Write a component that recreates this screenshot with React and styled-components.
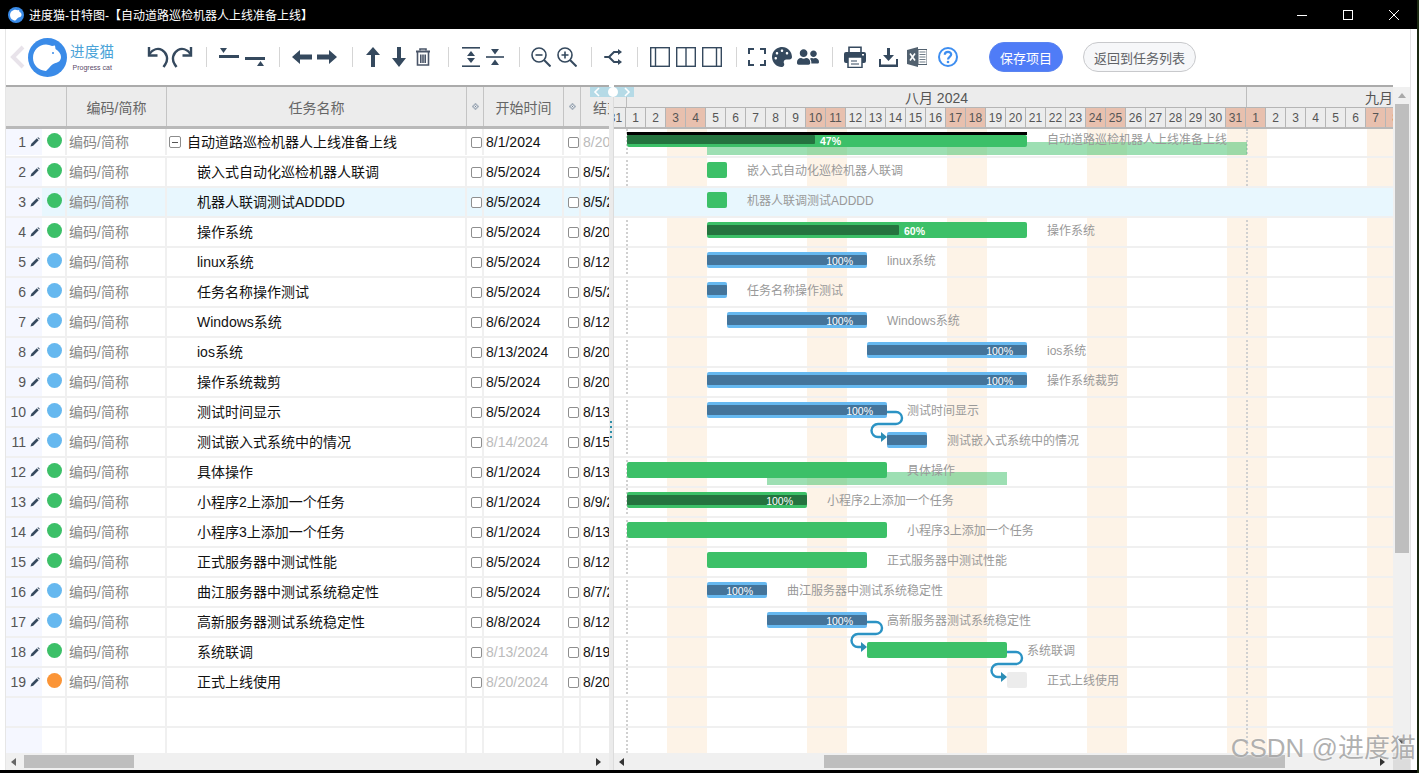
import React from "react";
import styled, { createGlobalStyle } from "styled-components";
import { FaPalette, FaUserFriends } from "react-icons/fa";

const FONT = `"Liberation Sans", "Noto Sans CJK SC", sans-serif`;
const DAY = 20;
const ORIGIN = 13; // the first full day (Aug 1) starts 13px into the chart

const GREEN = "#3cc068";
const BLUE = "#66b8ef";
const ORANGE = "#fb9537";

const tasks = [
  { name: "自动道路巡检机器人上线准备上线", start: "8/1/2024", end: "8/20/2024", color: GREEN, from: 1, to: 21, summary: true, percent: 47, progressTo: 10.4, parent: true, startBase: 5, endBase: 32 },
  { name: "嵌入式自动化巡检机器人联调", start: "8/5/2024", end: "8/5/2024", color: GREEN, from: 5, to: 6 },
  { name: "机器人联调测试ADDDD", start: "8/5/2024", end: "8/5/2024", color: GREEN, from: 5, to: 6 },
  { name: "操作系统", start: "8/5/2024", end: "8/20/2024", color: GREEN, from: 5, to: 21, percent: 60, progressTo: 14.6 },
  { name: "linux系统", start: "8/5/2024", end: "8/12/2024", color: BLUE, from: 5, to: 13, percent: 100 },
  { name: "任务名称操作测试", start: "8/5/2024", end: "8/5/2024", color: BLUE, from: 5, to: 6, done: true },
  { name: "Windows系统", start: "8/6/2024", end: "8/12/2024", color: BLUE, from: 6, to: 13, percent: 100 },
  { name: "ios系统", start: "8/13/2024", end: "8/20/2024", color: BLUE, from: 13, to: 21, percent: 100 },
  { name: "操作系统裁剪", start: "8/5/2024", end: "8/20/2024", color: BLUE, from: 5, to: 21, percent: 100 },
  { name: "测试时间显示", start: "8/5/2024", end: "8/13/2024", color: BLUE, from: 5, to: 14, percent: 100 },
  { name: "测试嵌入式系统中的情况", start: "8/14/2024", end: "8/15/2024", startMuted: true, color: BLUE, from: 14, to: 16, done: true },
  { name: "具体操作", start: "8/1/2024", end: "8/13/2024", color: GREEN, from: 1, to: 14, startBase: 8, endBase: 20 },
  { name: "小程序2上添加一个任务", start: "8/1/2024", end: "8/9/2024", color: GREEN, from: 1, to: 10, percent: 100 },
  { name: "小程序3上添加一个任务", start: "8/1/2024", end: "8/13/2024", color: GREEN, from: 1, to: 14 },
  { name: "正式服务器中测试性能", start: "8/5/2024", end: "8/12/2024", color: GREEN, from: 5, to: 13 },
  { name: "曲江服务器中测试系统稳定性", start: "8/5/2024", end: "8/7/2024", color: BLUE, from: 5, to: 8, percent: 100 },
  { name: "高新服务器测试系统稳定性", start: "8/8/2024", end: "8/12/2024", color: BLUE, from: 8, to: 13, percent: 100 },
  { name: "系统联调", start: "8/13/2024", end: "8/19/2024", startMuted: true, color: GREEN, from: 13, to: 20 },
  { name: "正式上线使用", start: "8/20/2024", end: "8/20/2024", startMuted: true, color: ORANGE, from: 20, to: 21, empty: true },
];

const WEEKENDS = [3, 4, 10, 11, 17, 18, 24, 25, 31, 32, 38, 39];
const dayLabels = [31];
for (let d = 1; d <= 31; d++) dayLabels.push(d);
for (let d = 1; d <= 8; d++) dayLabels.push(d);

const xOf = (day) => ORIGIN + (day - 1) * DAY;

const GlobalStyle = createGlobalStyle`
  html, body { margin: 0; padding: 0; height: 100%; overflow: hidden; background: #000; }
  body { font-family: ${FONT}; font-size: 14px; }
  * { box-sizing: border-box; }
`;

const Page = styled.div`
  width: 1419px;
  height: 773px;
  display: flex;
  flex-direction: column;
  background: #000;
  border-right: 2px solid #1c2a12;
`;

const TitleBar = styled.div`
  height: 29px;
  flex: none;
  display: flex;
  align-items: center;
  padding-left: 8px;
  color: #fff;
  font-size: 12px;
`;

const TitleText = styled.span`
  margin-left: 5px;
  flex: 1;
`;

const WindowButton = styled.div`
  width: 46px;
  height: 29px;
  display: flex;
  align-items: center;
  justify-content: center;
`;

const WindowBody = styled.div`
  height: 741px;
  flex: none;
  display: flex;
  flex-direction: column;
  background: #fff;
  padding: 0 6px 0 5px;
`;

const Toolbar = styled.div`
  height: 56px;
  flex: none;
  display: flex;
  align-items: center;
  padding-left: 3px;
  border-left: 1px solid #e6e6e6;
  border-right: 1px solid #e6e6e6;
`;

const Logo = styled.div`
  display: flex;
  align-items: center;
  width: 96px;
  margin-left: 3px;
`;

const LogoWords = styled.div`
  display: flex;
  flex-direction: column;
  align-items: center;
  margin-left: 3px;
  margin-top: 1px;
`;

const LogoName = styled.span`
  color: #4aa3d8;
  font-size: 14.5px;
  line-height: 18px;
  letter-spacing: 0.3px;
`;

const LogoSub = styled.span`
  color: #5a4a6a;
  font-size: 7px;
  line-height: 10px;
  margin-top: 2px;
  white-space: nowrap;
`;

const ToolIcon = styled.span`
  display: flex;
  align-items: center;
  justify-content: center;
  width: ${(p) => p.$w || 20}px;
  margin-left: ${(p) => p.$gap ?? 0}px;
  color: #35495e;
`;

const Separator = styled.span`
  width: 1px;
  height: 20px;
  background: #d5d5d5;
  margin-left: ${(p) => p.$gap ?? 12}px;
`;

const PillButton = styled.button`
  height: 30px;
  border-radius: 15px;
  font: 13px ${FONT};
  padding: 0;
  width: ${(p) => p.$w}px;
  margin-left: ${(p) => p.$gap}px;
  color: ${(p) => (p.$primary ? "#fff" : "#606266")};
  background: ${(p) => (p.$primary ? "#4f7cf7" : "#f6f7f9")};
  border: 1px solid ${(p) => (p.$primary ? "#5a84f0" : "#c8c9cc")};
`;

const Workspace = styled.div`
  flex: 1;
  min-height: 0;
  display: flex;
  position: relative;
  border-left: 1px solid #e6e6e6;
`;

const TablePanel = styled.div`
  width: 603px;
  flex: none;
  display: flex;
  flex-direction: column;
  overflow: hidden;
`;

const TableHead = styled.div`
  height: 44px;
  flex: none;
  display: grid;
  grid-template-columns: 61px 100px 300px 17px 80px 17px 80px;
  background: #ececec;
  border-top: 2px solid #ababab;
  border-bottom: 3px solid #b9b9b9;
`;

const HeadCell = styled.div`
  display: flex;
  align-items: center;
  justify-content: center;
  white-space: nowrap;
  overflow: hidden;
  color: #666;
  border-right: ${(p) => (p.$last ? "none" : "1px solid #c4c4c4")};
`;

const Diamond = styled.span`
  width: 5px;
  height: 5px;
  background: #66788a;
  border: 1px solid #b4bcc6;
  box-shadow: inset 0 0 0 1px #eef0f2;
  transform: rotate(45deg);
`;

const TableRows = styled.div`
  flex: 1;
  min-height: 0;
  overflow: hidden;
`;

const Row = styled.div`
  height: 30px;
  display: grid;
  grid-template-columns: 36px 25px 100px 300px 17px 80px 17px 80px;
  border-bottom: 2px solid #f0f0f0;
  background: ${(p) => (p.$active ? "#e8f7fe" : "transparent")};
  &:first-child {
    height: 29px;
    padding-bottom: 1px;
  }
`;

const Cell = styled.div`
  display: flex;
  align-items: center;
  overflow: hidden;
  white-space: nowrap;
  min-width: 0;
  border-right: ${(p) => (p.$plain ? 0 : 2)}px solid #f0f0f0;
`;

const NumCell = styled.div`
  display: flex;
  align-items: center;
  justify-content: flex-end;
  background: #f5f7ff;
  color: #555;
  padding-right: 2px;
`;

const RowNumber = styled.span`
  margin-right: 4px;
`;

const StatusCell = styled(Cell)`
  padding-left: 5px;
`;

const StatusDot = styled.span`
  width: 15px;
  height: 15px;
  border-radius: 50%;
  margin-top: -4px;
  background: ${(p) => p.$color};
`;

const CodeCell = styled(Cell)`
  color: #888;
  padding-left: 2px;
  padding-bottom: 2px;
`;

const NameCell = styled(Cell)`
  color: #111;
  padding-left: ${(p) => (p.$parent ? 2 : 30)}px;
  padding-bottom: 2px;
`;

const Collapse = styled.span`
  width: 12px;
  height: 12px;
  margin-right: 6px;
  margin-top: 2px;
  flex: none;
  border: 1px solid #8c8c8c;
  border-radius: 2px;
  display: flex;
  align-items: center;
  justify-content: center;
  &::before {
    content: "";
    width: 6px;
    height: 1px;
    background: #555;
  }
`;

const CheckCell = styled(Cell)`
  padding-left: 4px;
`;

const DateCell = styled(Cell)`
  color: ${(p) => (p.$muted ? "#bbb" : "#111")};
  padding-left: 2px;
`;

const Check = styled.span`
  width: 11px;
  height: 11px;
  flex: none;
  border: 1px solid #8f8f8f;
  border-radius: 2px;
  background: #fff;
`;

const Splitter = styled.div`
  width: 5px;
  flex: none;
  margin-top: 2px;
  padding-top: 334px;
  background: #ebebeb;
  border-right: 1px solid #dcdcdc;
  display: flex;
  flex-direction: column;
  gap: 3px;
`;

const GripDot = styled.span`
  width: 2px;
  height: 2px;
  margin-left: 1px;
  background: #2e8fa8;
`;

const SliderTab = styled.div`
  position: absolute;
  left: 584px;
  top: 2px;
  width: 44px;
  height: 10px;
  background: #b5dae6;
  display: flex;
  align-items: center;
  justify-content: space-between;
  padding: 0 3px;
`;

const SliderKnob = styled.span`
  position: absolute;
  left: 18px;
  top: 0;
  width: 10px;
  height: 10px;
  border-radius: 50%;
  background: #fff;
`;

const GanttPanel = styled.div`
  width: 797px;
  flex: none;
  display: flex;
  border-right: 1px solid #e6e6e6;
`;

const GanttMain = styled.div`
  width: 779px;
  flex: none;
  display: flex;
  flex-direction: column;
  overflow: hidden;
`;

const GanttHead = styled.div`
  height: 44px;
  flex: none;
  background: #ececec;
  border-top: 2px solid #ababab;
  border-bottom: 2px solid #b9b9b9;
  overflow: hidden;
`;

const MonthRow = styled.div`
  height: 20px;
  display: flex;
`;

const Month = styled.div`
  flex: none;
  height: 20px;
  line-height: 22px;
  color: #555;
  white-space: nowrap;
  width: ${(p) => p.$w}px;
  text-align: ${(p) => (p.$left ? "left" : "center")};
  padding-left: ${(p) => (p.$left ? 118 : 0)}px;
  border-right: 1px solid #bdbdbd;
`;

const DayRow = styled.div`
  height: 20px;
  display: flex;
  margin-left: -8px;
  border-top: 1px solid #b5b5b5;
`;

const DayCell = styled.div`
  width: 20px;
  flex: none;
  font-size: 12px;
  line-height: 20px;
  text-align: center;
  color: #555;
  background: ${(p) => (p.$weekend ? "#e8c0ae" : "#ececec")};
  border-right: 1px solid #b5b5b5;
`;

const Chart = styled.div`
  flex: 1;
  min-height: 0;
  position: relative;
  overflow: hidden;
`;

const Stripes = styled.div`
  position: absolute;
  inset: 0;
  display: flex;
  margin-left: -7px;
`;

const Stripe = styled.div`
  width: 20px;
  flex: none;
  background: ${(p) => (p.$weekend ? "#fdf3e7" : "transparent")};
`;

const TodayLine = styled.div`
  position: absolute;
  top: 0;
  bottom: 0;
  border-left: 2px dotted #d0d0d0;
`;

const ChartRow = styled.div`
  position: relative;
  height: ${(p) => (p.$first ? 29 : 30)}px;
  border-bottom: 2px solid #f0f0f0;
  background: ${(p) => (p.$active ? "#e8f7fe" : "transparent")};
`;

const Bar = styled.div`
  position: absolute;
  top: ${(p) => (p.$first ? 6 : 4)}px;
  height: ${(p) => (p.$first ? 12 : 16)}px;
  border-radius: 2px;
  background: ${(p) => p.$color};
`;

const Progress = styled.div`
  position: absolute;
  left: 0;
  top: ${(p) => (p.$first ? 0 : 3)}px;
  height: ${(p) => (p.$first ? 9 : 10)}px;
  border-radius: 1px;
  background: ${(p) => p.$color};
`;

const Percent = styled.span`
  position: absolute;
  top: ${(p) => (p.$first ? 0 : 3)}px;
  right: 14px;
  color: #fff;
  font-size: 10.5px;
  line-height: 13px;
  font-weight: ${(p) => (p.$bold ? 700 : 400)};
  white-space: nowrap;
`;

const SummaryCap = styled.div`
  position: absolute;
  top: 3px;
  height: 3px;
  background: #000;
`;

const Baseline = styled.div`
  position: absolute;
  height: 13px;
  top: ${(p) => (p.$first ? 13 : 14)}px;
  background: rgba(60, 192, 104, 0.5);
`;

const BarLabel = styled.span`
  position: absolute;
  top: ${(p) => (p.$first ? 3 : 5)}px;
  font-size: 12px;
  line-height: 16px;
  color: #999;
  white-space: nowrap;
`;

const Links = styled.svg`
  position: absolute;
  left: 0;
  top: 0;
  pointer-events: none;
`;

const VScroll = styled.div`
  width: 17px;
  flex: none;
  margin-top: 2px;
  padding-top: 5px;
  background: #f0f0f0;
  display: flex;
  flex-direction: column;
  align-items: center;
`;

const VThumb = styled.div`
  width: 14px;
  height: 449px;
  margin-top: 2px;
  margin-bottom: auto;
  background: #bebebe;
`;

const VCorner = styled.div`
  margin-top: 5px;
  width: 17px;
  height: 17px;
  background: #dcdcdc;
`;

const HScroll = styled.div`
  height: 17px;
  flex: none;
  display: flex;
  align-items: center;
  justify-content: space-between;
  background: #f0f0f0;
  padding: 0 4px;
  position: relative;
`;

const HThumb = styled.div`
  position: absolute;
  top: 2px;
  height: 13px;
  background: #bebebe;
  left: ${(p) => p.$left}px;
  width: ${(p) => p.$w}px;
`;

const Watermark = styled.div`
  position: absolute;
  right: -5px;
  bottom: 7px;
  font-size: 26px;
  line-height: 30px;
  color: rgba(150, 150, 150, 0.75);
  text-shadow: 0 0 2px rgba(255, 255, 255, 0.9);
  white-space: nowrap;
`;

const Arrow = ({ dir, color = "#666" }) => {
  const shapes = {
    left: "6,1 6,9 1,5",
    right: "1,1 1,9 6,5",
    up: "1,6 9,6 5,1",
    down: "1,1 9,1 5,6",
  };
  return (
    <svg width="10" height="10" viewBox="0 0 10 10">
      <polygon points={shapes[dir]} fill={color} />
    </svg>
  );
};

const Chevron = ({ flip }) => (
  <svg width="8" height="10" viewBox="0 0 8 10" fill="none">
    <path d={flip ? "M2 1 L6 5 L2 9" : "M6 1 L2 5 L6 9"} stroke="#fff" strokeWidth="1.6" />
  </svg>
);

const C = "#35495e";

const icons = {
  undo: (
    <svg width="22" height="22" viewBox="0 0 22 22" fill="none" stroke={C} strokeWidth="2.4">
      <path d="M2.5 8 C6 3 11 2 15 4 C20 7 21.5 13 18.5 18 L16.5 21" />
      <path d="M2 1 V9.5 H10.5" />
    </svg>
  ),
  redo: (
    <svg width="22" height="22" viewBox="0 0 22 22" fill="none" stroke={C} strokeWidth="2.4">
      <path d="M19.5 8 C16 3 11 2 7 4 C2 7 0.5 13 3.5 18 L5.5 21" />
      <path d="M20 1 V9.5 H11.5" />
    </svg>
  ),
  insertAbove: (
    <svg width="20" height="20" viewBox="0 0 20 20">
      <polygon points="1,1 8,1 4.5,6" fill={C} />
      <rect x="0" y="8" width="20" height="3" fill={C} />
    </svg>
  ),
  insertBelow: (
    <svg width="20" height="20" viewBox="0 0 20 20">
      <rect x="0" y="10" width="20" height="3" fill={C} />
      <polygon points="12,19 19,19 15.5,14" fill={C} />
    </svg>
  ),
  left: (
    <svg width="20" height="14" viewBox="0 0 20 14">
      <polygon points="0,7 8,0 8,4.5 20,4.5 20,9.5 8,9.5 8,14" fill={C} />
    </svg>
  ),
  right: (
    <svg width="20" height="14" viewBox="0 0 20 14">
      <polygon points="20,7 12,0 12,4.5 0,4.5 0,9.5 12,9.5 12,14" fill={C} />
    </svg>
  ),
  up: (
    <svg width="14" height="20" viewBox="0 0 14 20">
      <polygon points="7,0 14,8 9,8 9,20 5,20 5,8 0,8" fill={C} />
    </svg>
  ),
  down: (
    <svg width="14" height="20" viewBox="0 0 14 20">
      <polygon points="7,20 14,11 9,11 9,0 5,0 5,11 0,11" fill={C} />
    </svg>
  ),
  trash: (
    <svg width="16" height="18" viewBox="0 0 16 18" fill="none" stroke="#4a5568" strokeWidth="1.6">
      <path d="M5 2.5 V1 H11 V2.5" />
      <path d="M1 3.5 H15" strokeWidth="2" />
      <path d="M2.5 4 V17 H13.5 V4" />
      <path d="M5.8 6.5 V15 M8 6.5 V15 M10.2 6.5 V15" />
    </svg>
  ),
  expand: (
    <svg width="18" height="20" viewBox="0 0 18 20">
      <rect x="0" y="0" width="18" height="1.6" fill={C} />
      <rect x="0" y="18.4" width="18" height="1.6" fill={C} />
      <polygon points="9,4 13,9 5,9" fill={C} />
      <polygon points="9,16 13,11 5,11" fill={C} />
    </svg>
  ),
  collapse: (
    <svg width="18" height="20" viewBox="0 0 18 20">
      <rect x="0" y="9.2" width="18" height="1.6" fill={C} />
      <polygon points="9,7.5 13,2 5,2" fill={C} />
      <polygon points="9,12.5 13,18 5,18" fill={C} />
    </svg>
  ),
  zoomOut: (
    <svg width="20" height="20" viewBox="0 0 20 20" fill="none" stroke={C} strokeWidth="1.6">
      <circle cx="8" cy="8" r="7" />
      <path d="M12.8 12.8 L19.5 19.5" strokeWidth="2" />
      <path d="M4.5 8 H11.5" />
    </svg>
  ),
  zoomIn: (
    <svg width="20" height="20" viewBox="0 0 20 20" fill="none" stroke={C} strokeWidth="1.6">
      <circle cx="8" cy="8" r="7" />
      <path d="M12.8 12.8 L19.5 19.5" strokeWidth="2" />
      <path d="M4.5 8 H11.5 M8 4.5 V11.5" />
    </svg>
  ),
  link: (
    <svg width="20" height="18" viewBox="0 0 20 18" fill="none" stroke={C} strokeWidth="2">
      <path d="M2 9 H6 L11 4 H16" />
      <path d="M6 9 L11 14 H16" />
      <polygon points="15,1 19,4 15,7" fill={C} strokeWidth="0" />
      <polygon points="15,11 19,14 15,17" fill={C} strokeWidth="0" />
      <circle cx="2" cy="9" r="1" fill={C} stroke="none" />
    </svg>
  ),
  paneLeft: (
    <svg width="20" height="20" viewBox="0 0 20 20" fill="none" stroke={C} strokeWidth="1.4">
      <rect x="0.7" y="0.7" width="18.6" height="18.6" />
      <path d="M5.5 1 V19" />
    </svg>
  ),
  paneMid: (
    <svg width="20" height="20" viewBox="0 0 20 20" fill="none" stroke={C} strokeWidth="1.4">
      <rect x="0.7" y="0.7" width="18.6" height="18.6" />
      <path d="M10 1 V19" />
    </svg>
  ),
  paneRight: (
    <svg width="20" height="20" viewBox="0 0 20 20" fill="none" stroke={C} strokeWidth="1.4">
      <rect x="0.7" y="0.7" width="18.6" height="18.6" />
      <path d="M14.5 1 V19" />
    </svg>
  ),
  fullscreen: (
    <svg width="18" height="18" viewBox="0 0 18 18" fill="none" stroke={C} strokeWidth="2">
      <path d="M1 6 V1 H6 M12 1 H17 V6 M17 12 V17 H12 M6 17 H1 V12" />
    </svg>
  ),
  print: (
    <svg width="22" height="22" viewBox="0 0 22 22">
      <path d="M5 6 V1.2 H17 V6" fill="none" stroke={C} strokeWidth="1.6" />
      <rect x="0" y="6" width="22" height="11" rx="2" fill={C} />
      <rect x="4" y="11" width="14" height="10.5" fill="#fff" stroke={C} strokeWidth="1.5" />
      <path d="M7 15 H13 M7 18 H15" stroke={C} strokeWidth="1.2" />
      <rect x="18" y="8" width="2" height="1.5" fill="#fff" />
    </svg>
  ),
  download: (
    <svg width="19" height="19" viewBox="0 0 19 19" fill={C}>
      <rect x="8" y="0" width="3" height="8" />
      <polygon points="4,7 15,7 9.5,13" />
      <path d="M0 11 H2 V16.5 H17 V11 H19 V19 H0 Z" />
    </svg>
  ),
  excel: (
    <svg width="20" height="20" viewBox="0 0 20 20">
      <polygon points="0,3 11,0 11,20 0,17" fill="#52616f" />
      <rect x="11" y="2.5" width="9" height="15" fill="#fff" stroke="#52616f" strokeWidth="1" />
      <path d="M12.5 5 H18.5 M12.5 7.5 H18.5 M12.5 10 H18.5 M12.5 12.5 H18.5 M12.5 15 H18.5" stroke="#6f7c88" strokeWidth="1.2" />
      <path d="M3 6.5 L8 13.5 M8 6.5 L3 13.5" stroke="#fff" strokeWidth="1.6" />
    </svg>
  ),
  help: (
    <svg width="20" height="20" viewBox="0 0 20 20" fill="none" stroke="#3e8ef0" strokeWidth="2">
      <circle cx="10" cy="10" r="9" />
      <path d="M6.8 7.8 C6.8 5.8 8.2 4.8 10 4.8 C11.8 4.8 13.2 6 13.2 7.6 C13.2 9.8 10 10 10 12.4" strokeWidth="2.2" />
      <circle cx="10" cy="15" r="1.3" fill="#3e8ef0" stroke="none" />
    </svg>
  ),
};

const CAT_HEAD =
  "M5 20 C5 12 11 6.5 18 6.5 C20 6.5 22 7 24 8 L27 7.5 L27.5 11 C31 13 33 16 33 19 C33 22.5 30.5 24.5 27.5 25 C25 25.5 23 27.5 21 30 L18 33 C10.5 32.5 5 27 5 20 Z";

const LogoMark = ({ size = 39, eye }) => (
  <svg width={size} height={size} viewBox="0 0 39 39">
    <circle cx="19.5" cy="19.5" r="19.5" fill="#3a8be8" />
    <path d={CAT_HEAD} fill="#fff" />
    {eye && <circle cx="25" cy="15" r="1" fill="#3a8be8" />}
  </svg>
);

const Pencil = () => (
  <svg width="10" height="10" viewBox="0 0 10 10">
    <path d="M0.5 9.5 L1.3 6.8 L6.8 1.3 L8.7 3.2 L3.2 8.7 Z" fill="#35495e" />
    <path d="M7.4 0.7 L8.2 0.2 L9.8 1.8 L9.3 2.6 Z" fill="#35495e" />
  </svg>
);

// S-shaped connector from a bar's end to the start of the bar one row below
const linkPath = (x, y) =>
  `M${x} ${y} H${x + 9} a6 6 0 0 1 0 12 H${x - 9} a6.5 6.5 0 0 0 0 13 H${x - 4}`;

const links = [
  { x: xOf(14), y: 283 },
  { x: xOf(13), y: 493 },
  { x: xOf(20), y: 523 },
];

const toolbarItems = [
  ["undo", 22, 23],
  ["redo", 22, 2],
  ["sep", 0, 13],
  ["insertAbove", 20, 12],
  ["insertBelow", 20, 6],
  ["sep", 0, 14],
  ["left", 20, 12],
  ["right", 20, 5],
  ["sep", 0, 15],
  ["up", 14, 13],
  ["down", 14, 12],
  ["trash", 16, 9],
  ["sep", 0, 17],
  ["expand", 18, 13],
  ["collapse", 18, 6],
  ["sep", 0, 15],
  ["zoomOut", 20, 11],
  ["zoomIn", 20, 6],
  ["sep", 0, 14],
  ["link", 20, 11],
  ["sep", 0, 14],
  ["paneLeft", 20, 12],
  ["paneMid", 20, 6],
  ["paneRight", 20, 6],
  ["sep", 0, 14],
  ["fullscreen", 20, 10],
  ["palette", 20, 5],
  ["people", 22, 5],
  ["sep", 0, 13],
  ["print", 22, 11],
  ["download", 19, 13],
  ["excel", 20, 9],
  ["help", 20, 11],
];

const renderTool = ([id, w, gap], i) => {
  if (id === "sep") return <Separator key={i} $gap={gap} />;
  let glyph = icons[id];
  if (id === "palette") glyph = <FaPalette size={20} />;
  if (id === "people") glyph = <FaUserFriends size={22} />;
  return (
    <ToolIcon key={i} $w={w} $gap={gap}>
      {glyph}
    </ToolIcon>
  );
};

const TaskBar = ({ task, first }) => {
  const left = xOf(task.from);
  const width = (task.to - task.from) * DAY;
  const labelLeft = left + width + 20;
  const darkBlue = task.color === BLUE;
  const fill = task.empty ? "#ececec" : task.color;
  const progressColor = darkBlue ? "#44749a" : "#24733f";
  const hasProgress = task.percent || task.done;
  const progressWidth = task.progressTo ? (task.progressTo - task.from) * DAY : width;

  return (
    <>
      {task.startBase && (
        <Baseline
          $first={first}
          style={{ left: xOf(task.startBase), width: (task.endBase - task.startBase) * DAY }}
        />
      )}
      {task.summary && <SummaryCap style={{ left, width }} />}
      <Bar $first={first} $color={fill} style={{ left, width }}>
        {hasProgress && (
          <Progress $first={first} $color={progressColor} style={{ width: progressWidth }} />
        )}
        {task.percent && (
          <Percent
            $first={first}
            $bold={task.progressTo}
            style={task.progressTo ? { left: progressWidth + 5, right: "auto" } : undefined}
          >
            {task.percent}%
          </Percent>
        )}
      </Bar>
      <BarLabel $first={first} style={{ left: labelLeft }}>
        {task.name}
      </BarLabel>
    </>
  );
};

export default function App() {
  const blankRows = [0, 1];

  return (
    <Page>
      <GlobalStyle />
      <TitleBar>
        <LogoMark size={16} />
        <TitleText>进度猫-甘特图-【自动道路巡检机器人上线准备上线】</TitleText>
        <WindowButton>
          <svg width="10" height="10" viewBox="0 0 10 10">
            <path d="M0 5.5 H10" stroke="#fff" />
          </svg>
        </WindowButton>
        <WindowButton>
          <svg width="10" height="10" viewBox="0 0 10 10" fill="none">
            <rect x="0.5" y="0.5" width="9" height="9" stroke="#fff" />
          </svg>
        </WindowButton>
        <WindowButton>
          <svg width="10" height="10" viewBox="0 0 10 10">
            <path d="M0 0 L10 10 M10 0 L0 10" stroke="#fff" />
          </svg>
        </WindowButton>
      </TitleBar>

      <WindowBody>
        <Toolbar>
          <svg width="16" height="24" viewBox="0 0 16 24" fill="none">
            <path d="M14 2 L4 12 L14 22" stroke="#e8e3ea" strokeWidth="4" />
          </svg>
          <Logo>
            <LogoMark eye />
            <LogoWords>
              <LogoName>进度猫</LogoName>
              <LogoSub>Progress cat</LogoSub>
            </LogoWords>
          </Logo>
          {toolbarItems.map(renderTool)}
          <PillButton $primary $w={74} $gap={31}>
            保存项目
          </PillButton>
          <PillButton $w={113} $gap={20}>
            返回到任务列表
          </PillButton>
        </Toolbar>

        <Workspace>
          <TablePanel>
            <TableHead>
              <HeadCell />
              <HeadCell>编码/简称</HeadCell>
              <HeadCell>任务名称</HeadCell>
              <HeadCell>
                <Diamond />
              </HeadCell>
              <HeadCell>开始时间</HeadCell>
              <HeadCell>
                <Diamond />
              </HeadCell>
              <HeadCell $last>结束时间</HeadCell>
            </TableHead>
            <TableRows>
              {tasks.map((t, i) => (
                <Row key={i} $active={i === 2}>
                  <NumCell>
                    <RowNumber>{i + 1}</RowNumber>
                    <Pencil />
                  </NumCell>
                  <StatusCell>
                    <StatusDot $color={t.color} />
                  </StatusCell>
                  <CodeCell>编码/简称</CodeCell>
                  <NameCell $parent={t.parent}>
                    {t.parent && <Collapse />}
                    {t.name}
                  </NameCell>
                  <CheckCell>
                    <Check />
                  </CheckCell>
                  <DateCell $muted={t.startMuted}>{t.start}</DateCell>
                  <CheckCell>
                    <Check />
                  </CheckCell>
                  <DateCell $muted={i === 0} $plain>
                    {t.end}
                  </DateCell>
                </Row>
              ))}
              {blankRows.map((b) => (
                <Row key={b}>
                  <NumCell />
                  <Cell />
                  <Cell />
                  <Cell />
                  <Cell />
                  <Cell />
                  <Cell />
                  <Cell $plain />
                </Row>
              ))}
            </TableRows>
            <HScroll>
              <Arrow dir="left" />
              <HThumb $left={18} $w={110} />
              <Arrow dir="right" color="#333" />
            </HScroll>
          </TablePanel>

          <Splitter>
            {[0, 1, 2, 3].map((d) => (
              <GripDot key={d} />
            ))}
          </Splitter>

          <GanttPanel>
            <GanttMain>
              <GanttHead>
                <MonthRow>
                  <Month $w={13} />
                  <Month $w={620}>八月 2024</Month>
                  <Month $w={600} $left>
                    九月 2024
                  </Month>
                </MonthRow>
                <DayRow>
                  {dayLabels.map((d, i) => (
                    <DayCell key={i} $weekend={WEEKENDS.includes(i)}>
                      {d}
                    </DayCell>
                  ))}
                </DayRow>
              </GanttHead>
              <Chart>
                <Stripes>
                  {dayLabels.map((d, i) => (
                    <Stripe key={i} $weekend={WEEKENDS.includes(i)} />
                  ))}
                </Stripes>
                <TodayLine style={{ left: ORIGIN - 1 }} />
                <TodayLine style={{ left: ORIGIN + 31 * DAY - 1 }} />
                {tasks.map((t, i) => (
                  <ChartRow key={i} $active={i === 2} $first={i === 0}>
                    <TaskBar task={t} first={i === 0} />
                  </ChartRow>
                ))}
                {blankRows.map((b) => (
                  <ChartRow key={b} />
                ))}
                <Links width="779" height="620">
                  {links.map((l, i) => (
                    <g key={i}>
                      <path d={linkPath(l.x, l.y)} fill="none" stroke="#2b93c4" strokeWidth="2.4" />
                      <polygon
                        points={`${l.x - 6},${l.y + 20} ${l.x},${l.y + 25} ${l.x - 6},${l.y + 30}`}
                        fill="#2b8db5"
                      />
                    </g>
                  ))}
                </Links>
              </Chart>
              <HScroll>
                <Arrow dir="left" color="#333" />
                <HThumb $left={210} $w={461} />
                <Arrow dir="right" color="#333" />
              </HScroll>
            </GanttMain>
            <VScroll>
              <Arrow dir="up" color="#aaa" />
              <VThumb />
              <Arrow dir="down" color="#444" />
              <VCorner />
            </VScroll>
          </GanttPanel>

          <SliderTab>
            <Chevron />
            <SliderKnob />
            <Chevron flip />
          </SliderTab>
          <Watermark>CSDN @进度猫</Watermark>
        </Workspace>
      </WindowBody>
    </Page>
  );
}
